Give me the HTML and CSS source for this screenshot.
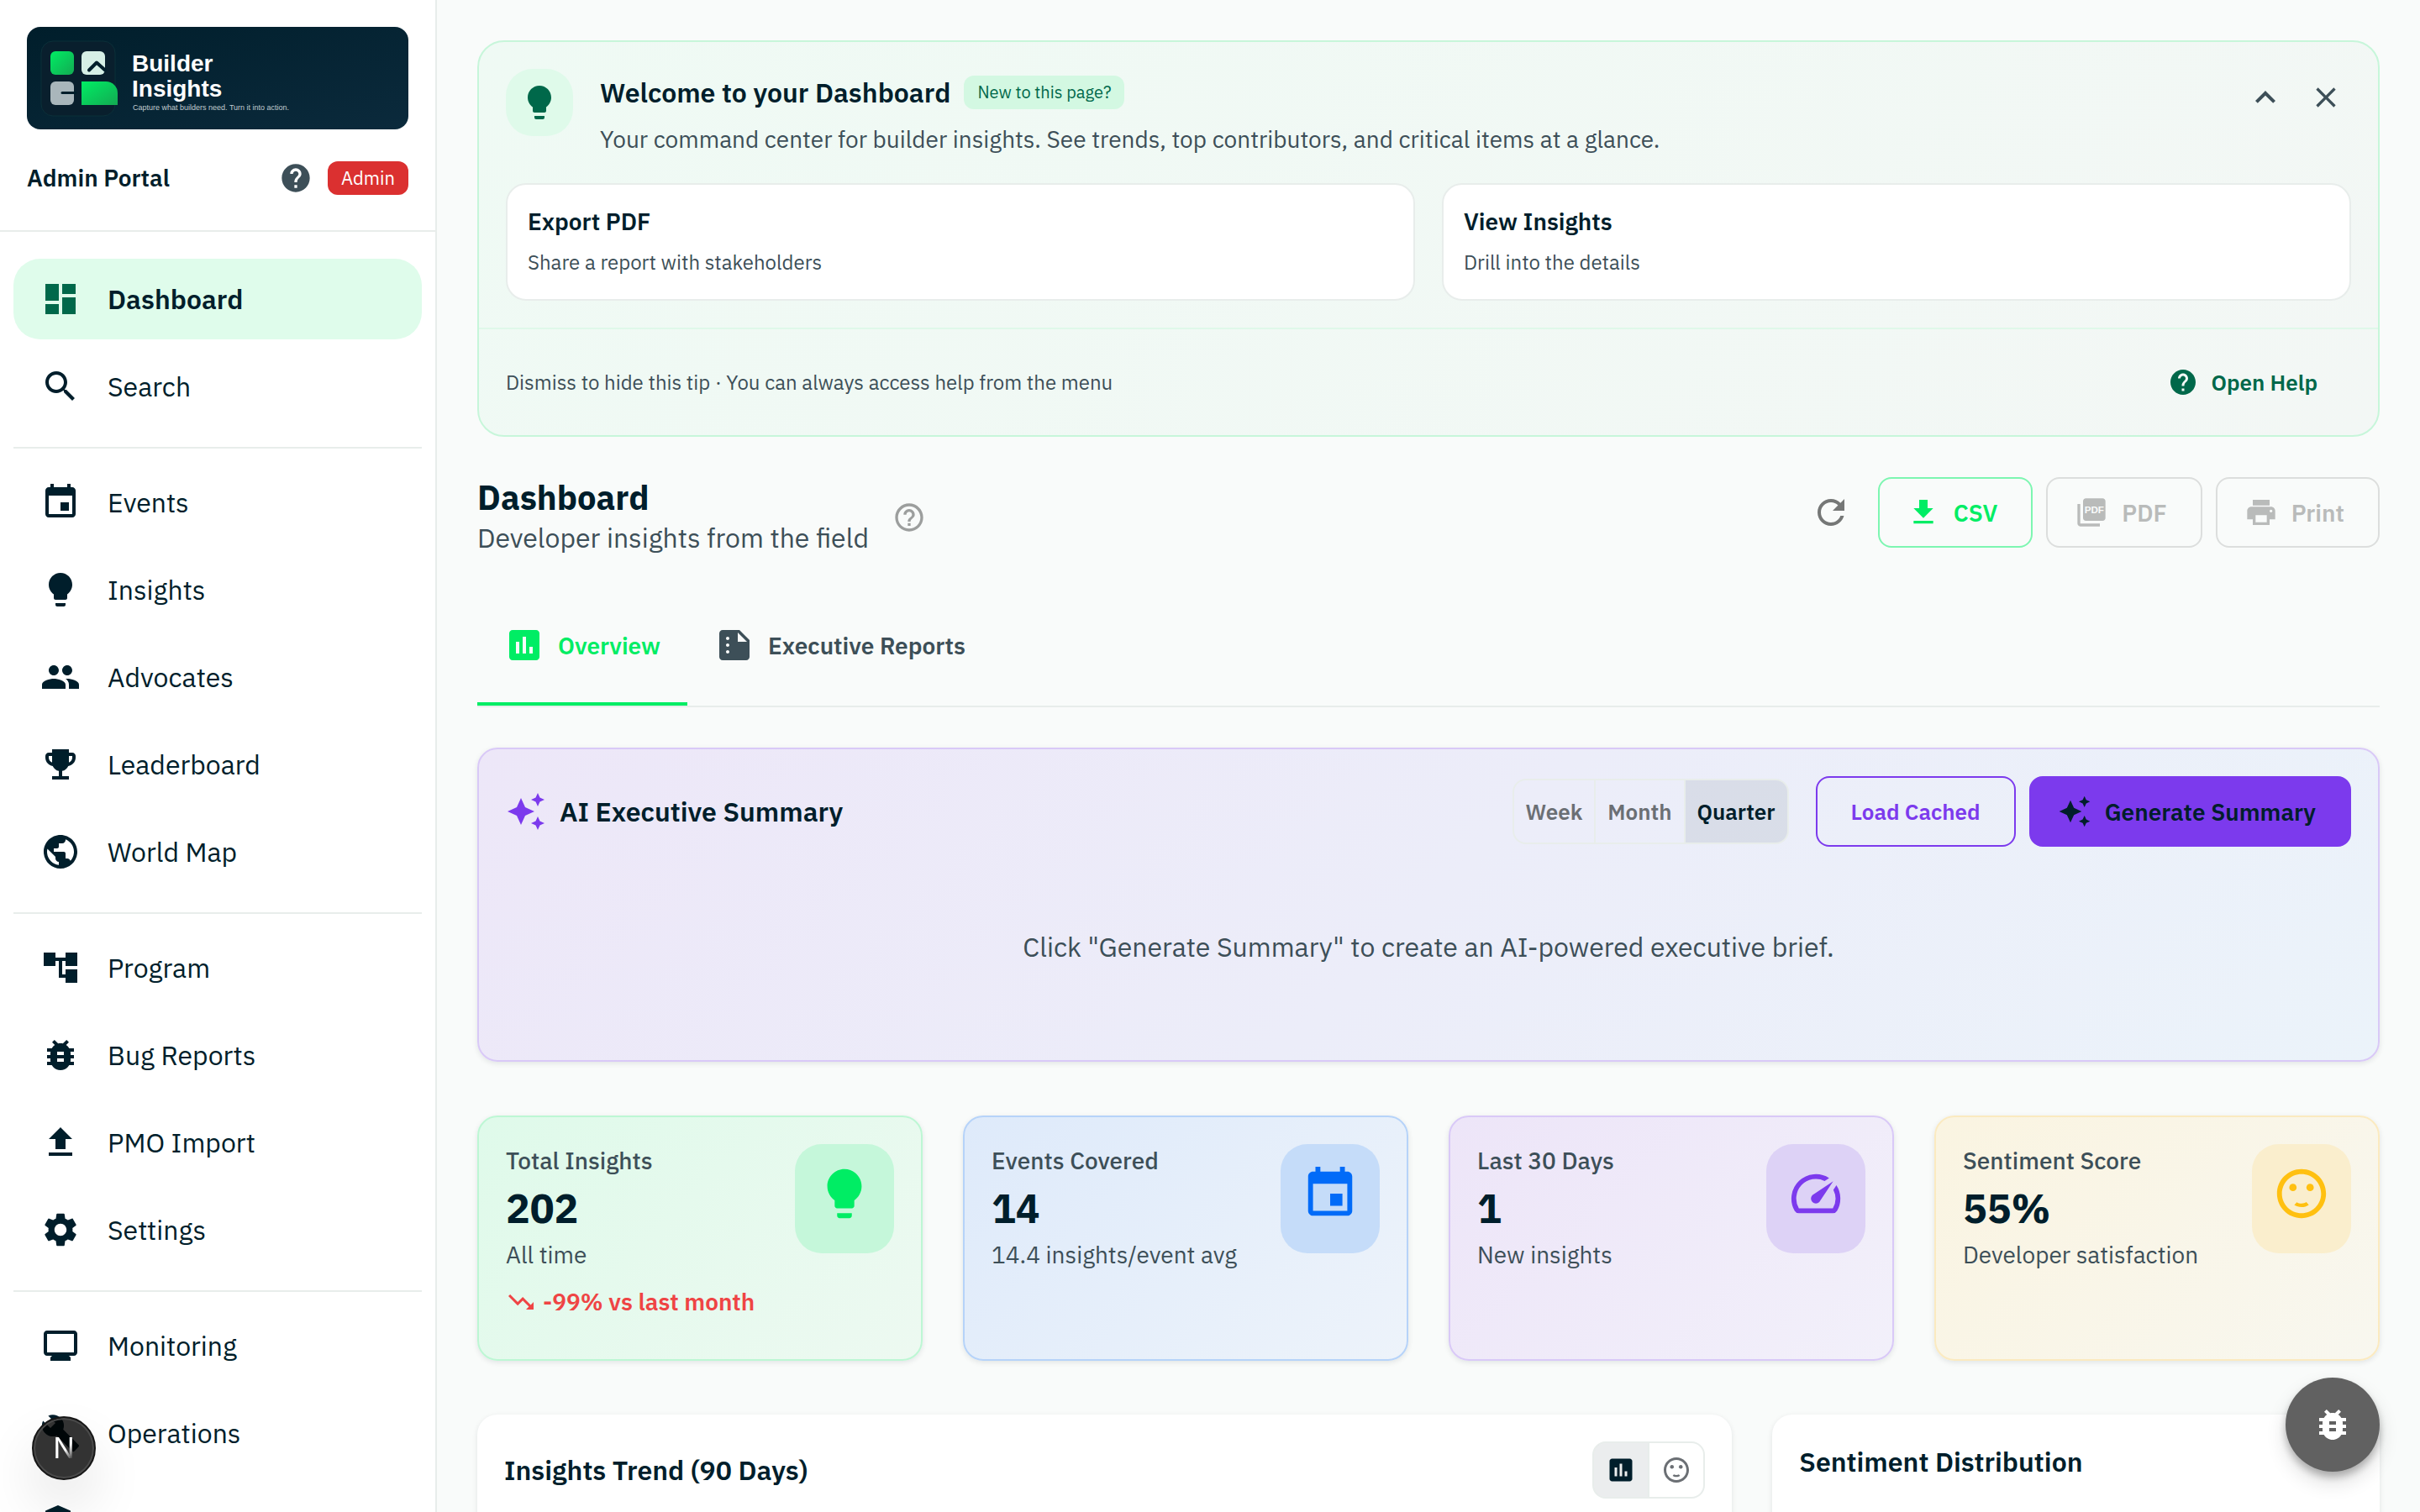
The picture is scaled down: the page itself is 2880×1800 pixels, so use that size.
FILE: index.html
```
<!DOCTYPE html>
<html lang="en">
<head>
    <meta charset="UTF-8">
    <meta name="viewport" content="width=device-width, initial-scale=1.0">
    <title>Builder Insights - Dashboard</title>
    <link rel="stylesheet" href="styles.css">
</head>
<body>
    <!-- Icon sprite -->
    <svg class="sprite" aria-hidden="true">
        <symbol id="i-dashboard" viewBox="0 0 24 24"><path d="M3 13h8V3H3v10zm0 8h8v-6H3v6zm10 0h8V11h-8v10zm0-18v6h8V3h-8z"/></symbol>
        <symbol id="i-search" viewBox="0 0 24 24"><path d="M15.5 14h-.79l-.28-.27C15.41 12.59 16 11.11 16 9.5 16 5.91 13.09 3 9.5 3S3 5.91 3 9.5 5.91 16 9.5 16c1.61 0 3.09-.59 4.23-1.57l.27.28v.79l5 4.99L20.49 19l-4.99-5zm-6 0C7.01 14 5 11.99 5 9.5S7.01 5 9.5 5 14 7.01 14 9.5 11.99 14 9.5 14z"/></symbol>
        <symbol id="i-event" viewBox="0 0 24 24"><path d="M17 12h-5v5h5v-5zM16 1v2H8V1H6v2H5c-1.11 0-1.99.9-1.99 2L3 19c0 1.1.89 2 2 2h14c1.1 0 2-.9 2-2V5c0-1.1-.9-2-2-2h-1V1h-2zm3 18H5V8h14v11z"/></symbol>
        <symbol id="i-bulb" viewBox="0 0 24 24"><path d="M9 21c0 .55.45 1 1 1h4c.55 0 1-.45 1-1v-1H9v1zm3-19C8.14 2 5 5.14 5 9c0 2.38 1.19 4.47 3 5.74V17c0 .55.45 1 1 1h6c.55 0 1-.45 1-1v-2.26c1.81-1.27 3-3.36 3-5.74 0-3.86-3.14-7-7-7z"/></symbol>
        <symbol id="i-people" viewBox="0 0 24 24"><path d="M16 11c1.66 0 2.99-1.34 2.99-3S17.66 5 16 5c-1.66 0-3 1.34-3 3s1.34 3 3 3zm-8 0c1.66 0 2.99-1.34 2.99-3S9.66 5 8 5C6.34 5 5 6.34 5 8s1.34 3 3 3zm0 2c-2.33 0-7 1.17-7 3.5V19h14v-2.5c0-2.33-4.67-3.5-7-3.5zm8 0c-.29 0-.62.02-.97.05 1.16.84 1.97 1.97 1.97 3.45V19h6v-2.5c0-2.33-4.67-3.5-7-3.5z"/></symbol>
        <symbol id="i-trophy" viewBox="0 0 24 24"><path d="M19 5h-2V3H7v2H5c-1.1 0-2 .9-2 2v1c0 2.55 1.92 4.63 4.39 4.94.63 1.5 1.98 2.63 3.61 2.96V19H7v2h10v-2h-4v-3.1c1.63-.33 2.98-1.46 3.61-2.96C19.08 12.63 21 10.55 21 8V7c0-1.1-.9-2-2-2zM5 8V7h2v3.82C5.84 10.4 5 9.3 5 8zm14 0c0 1.3-.84 2.4-2 2.82V7h2v1z"/></symbol>
        <symbol id="i-globe" viewBox="0 0 24 24"><path d="M12 2C6.48 2 2 6.48 2 12s4.48 10 10 10 10-4.48 10-10S17.52 2 12 2zm-1 17.93c-3.95-.49-7-3.85-7-7.93 0-.62.08-1.21.21-1.79L9 15v1c0 1.1.9 2 2 2v1.93zm6.9-2.54c-.26-.81-1-1.39-1.9-1.39h-1v-3c0-.55-.45-1-1-1H8v-2h2c.55 0 1-.45 1-1V7h2c1.1 0 2-.9 2-2v-.41c2.93 1.19 5 4.06 5 7.41 0 2.08-.8 3.97-2.1 5.39z"/></symbol>
        <symbol id="i-tree" viewBox="0 0 24 24"><path d="M22 11V3h-7v3H9V3H2v8h7V8h2v10h4v3h7v-8h-7v3h-2V8h2v3z"/></symbol>
        <symbol id="i-bug" viewBox="0 0 24 24"><path d="M20 8h-2.81c-.45-.78-1.07-1.45-1.82-1.96L17 4.41 15.59 3l-2.17 2.17C12.96 5.06 12.49 5 12 5c-.49 0-.96.06-1.41.17L8.41 3 7 4.41l1.62 1.63C7.88 6.55 7.26 7.22 6.81 8H4v2h2.09c-.05.33-.09.66-.09 1v1H4v2h2v1c0 .34.04.67.09 1H4v2h2.81c1.04 1.79 2.97 3 5.19 3s4.15-1.21 5.19-3H20v-2h-2.09c.05-.33.09-.66.09-1v-1h2v-2h-2v-1c0-.34-.04-.67-.09-1H20V8zm-6 8h-4v-2h4v2zm0-4h-4v-2h4v2z"/></symbol>
        <symbol id="i-upload" viewBox="0 0 24 24"><path d="M9 16h6v-6h4l-7-7-7 7h4v6zm-4 2h14v2H5v-2z"/></symbol>
        <symbol id="i-settings" viewBox="0 0 24 24"><path d="M19.14 12.94c.04-.3.06-.61.06-.94 0-.32-.02-.64-.07-.94l2.03-1.58c.18-.14.23-.41.12-.61l-1.92-3.32c-.12-.22-.37-.29-.59-.22l-2.39.96c-.5-.38-1.03-.7-1.62-.94l-.36-2.54c-.04-.24-.24-.41-.48-.41h-3.84c-.24 0-.43.17-.47.41l-.36 2.54c-.59.24-1.13.57-1.62.94l-2.39-.96c-.22-.08-.47 0-.59.22L2.74 8.87c-.12.21-.08.47.12.61l2.03 1.58c-.05.3-.09.63-.09.94s.02.64.07.94l-2.03 1.58c-.18.14-.23.41-.12.61l1.92 3.32c.12.22.37.29.59.22l2.39-.96c.5.38 1.03.7 1.62.94l.36 2.54c.05.24.24.41.48.41h3.84c.24 0 .44-.17.47-.41l.36-2.54c.59-.24 1.13-.56 1.62-.94l2.39.96c.22.08.47 0 .59-.22l1.92-3.32c.12-.22.07-.47-.12-.61l-2.01-1.58zM12 15.6c-1.98 0-3.6-1.62-3.6-3.6s1.62-3.6 3.6-3.6 3.6 1.62 3.6 3.6-1.62 3.6-3.6 3.6z"/></symbol>
        <symbol id="i-monitor" viewBox="0 0 24 24"><path d="M20 3H4c-1.1 0-2 .9-2 2v11c0 1.1.9 2 2 2h3l-1 1v2h12v-2l-1-1h3c1.1 0 2-.9 2-2V5c0-1.1-.9-2-2-2zm0 13H4V5h16v11z"/></symbol>
        <symbol id="i-build" viewBox="0 0 24 24"><path d="m22.7 19-9.1-9.1c.9-2.3.4-5-1.5-6.9-2-2-5-2.4-7.4-1.3L9 6 6 9 1.6 4.7C.4 7.1.9 10.1 2.9 12.1c1.9 1.9 4.6 2.4 6.9 1.5l9.1 9.1c.4.4 1 .4 1.4 0l2.3-2.3c.5-.4.5-1.1.1-1.4z"/></symbol>
        <symbol id="i-admin" viewBox="0 0 24 24"><path d="M17 11c.34 0 .67.04 1 .09V6.27L10.5 3 3 6.27v4.91c0 4.54 3.2 8.79 7.5 9.82.55-.13 1.08-.32 1.6-.55-.69-.98-1.1-2.17-1.1-3.45 0-3.31 2.69-6 6-6z"/><path d="M17 13c-2.21 0-4 1.79-4 4s1.79 4 4 4 4-1.79 4-4-1.79-4-4-4z"/></symbol>
        <symbol id="i-help" viewBox="0 0 24 24"><path d="M12 2C6.48 2 2 6.48 2 12s4.48 10 10 10 10-4.48 10-10S17.52 2 12 2zm1 17h-2v-2h2v2zm2.07-7.75-.9.92C13.45 12.9 13 13.5 13 15h-2v-.5c0-1.1.45-2.1 1.17-2.83l1.24-1.26c.37-.36.59-.86.59-1.41 0-1.1-.9-2-2-2s-2 .9-2 2H8c0-2.21 1.79-4 4-4s4 1.79 4 4c0 .88-.36 1.68-.93 2.25z"/></symbol>
        <symbol id="i-help-outline" viewBox="0 0 24 24"><path d="M11 18h2v-2h-2v2zm1-16C6.48 2 2 6.48 2 12s4.48 10 10 10 10-4.48 10-10S17.52 2 12 2zm0 18c-4.41 0-8-3.59-8-8s3.59-8 8-8 8 3.59 8 8-3.59 8-8 8zm0-14c-2.21 0-4 1.79-4 4h2c0-1.1.9-2 2-2s2 .9 2 2c0 2-3 1.75-3 5h2c0-2.25 3-2.5 3-5 0-2.21-1.79-4-4-4z"/></symbol>
        <symbol id="i-chevron-up" viewBox="0 0 24 24"><path d="m12 8-6 6 1.41 1.41L12 10.83l4.59 4.58L18 14z"/></symbol>
        <symbol id="i-close" viewBox="0 0 24 24"><path d="M19 6.41 17.59 5 12 10.59 6.41 5 5 6.41 10.59 12 5 17.59 6.41 19 12 13.41 17.59 19 19 17.59 13.41 12z"/></symbol>
        <symbol id="i-refresh" viewBox="0 0 24 24"><path d="M17.65 6.35C16.2 4.9 14.21 4 12 4c-4.42 0-7.99 3.58-7.99 8s3.57 8 7.99 8c3.73 0 6.84-2.55 7.73-6h-2.08c-.82 2.33-3.04 4-5.65 4-3.31 0-6-2.69-6-6s2.69-6 6-6c1.66 0 3.14.69 4.22 1.78L13 11h7V4l-2.35 2.35z"/></symbol>
        <symbol id="i-download" viewBox="0 0 24 24"><path d="M19 9h-4V3H9v6H5l7 7 7-7zM5 18v2h14v-2H5z"/></symbol>
        <symbol id="i-pdf" viewBox="0 0 24 24"><path d="M20 2H8c-1.1 0-2 .9-2 2v12c0 1.1.9 2 2 2h12c1.1 0 2-.9 2-2V4c0-1.1-.9-2-2-2zM4 6H2v14c0 1.1.9 2 2 2h14v-2H4V6z"/><text class="pdf-tag" x="14" y="12.7" text-anchor="middle">PDF</text></symbol>
        <symbol id="i-print" viewBox="0 0 24 24"><path d="M19 8H5c-1.66 0-3 1.34-3 3v6h4v4h12v-4h4v-6c0-1.66-1.34-3-3-3zm-3 11H8v-5h8v5zm3-7c-.55 0-1-.45-1-1s.45-1 1-1 1 .45 1 1-.45 1-1 1zm-1-9H6v4h12V3z"/></symbol>
        <symbol id="i-chart" viewBox="0 0 24 24"><path d="M19 3H5c-1.1 0-2 .9-2 2v14c0 1.1.9 2 2 2h14c1.1 0 2-.9 2-2V5c0-1.1-.9-2-2-2zM9 17H7v-7h2v7zm4 0h-2V7h2v10zm4 0h-2v-4h2v4z"/></symbol>
        <symbol id="i-report" viewBox="0 0 24 24"><path d="M15 3H5c-1.1 0-1.99.9-1.99 2L3 19c0 1.1.89 2 1.99 2H19c1.1 0 2-.9 2-2V9l-6-6zM8 17c-.55 0-1-.45-1-1s.45-1 1-1 1 .45 1 1-.45 1-1 1zm0-4c-.55 0-1-.45-1-1s.45-1 1-1 1 .45 1 1-.45 1-1 1zm0-4c-.55 0-1-.45-1-1s.45-1 1-1 1 .45 1 1-.45 1-1 1zm6 1V4.5l5.5 5.5H14z"/></symbol>
        <symbol id="i-sparkle" viewBox="0 0 24 24"><path d="m19 9 1.25-2.75L23 5l-2.75-1.25L19 1l-1.25 2.75L15 5l2.75 1.25L19 9zm-7.5.5L9 4 6.5 9.5 1 12l5.5 2.5L9 20l2.5-5.5L17 12l-5.5-2.5zM19 15l-1.25 2.75L15 19l2.75 1.25L19 23l1.25-2.75L23 19l-2.75-1.25L19 15z"/></symbol>
        <symbol id="i-speed" viewBox="0 0 24 24"><path d="m20.38 8.57-1.23 1.85a8 8 0 0 1-.22 7.58H5.07A8 8 0 0 1 15.58 6.85l1.85-1.23A10 10 0 0 0 3.35 19a2 2 0 0 0 1.72 1h13.85a2 2 0 0 0 1.74-1 10 10 0 0 0-.27-10.44zm-9.79 6.84a2 2 0 0 0 2.83 0l5.66-8.49-8.49 5.66a2 2 0 0 0 0 2.83z"/></symbol>
        <symbol id="i-smile" viewBox="0 0 24 24"><path d="M11.99 2C6.47 2 2 6.48 2 12s4.47 10 9.99 10C17.52 22 22 17.52 22 12S17.52 2 11.99 2zM12 20c-4.42 0-8-3.58-8-8s3.58-8 8-8 8 3.58 8 8-3.58 8-8 8z"/><circle cx="8.5" cy="9.5" r="1.5"/><circle cx="15.5" cy="9.5" r="1.5"/><path d="M12 16c-.73 0-1.38-.18-1.96-.52-.12.14-.86.98-1.01 1.15.86.55 1.87.87 2.97.87 1.11 0 2.12-.33 2.98-.88l-1.01-1.15c-.59.35-1.24.53-1.97.53z"/></symbol>
        <symbol id="i-trend-down" viewBox="0 0 24 24"><path d="m16 18 2.29-2.29-4.88-4.88-4 4L2 7.41 3.41 6l6 6 4-4 6.3 6.29L22 12v6z"/></symbol>
    </svg>

    <aside class="sidebar">
        <div class="sidebar-header">
            <svg class="logo" viewBox="0 0 454 122" role="img" aria-label="Builder Insights">
                <defs>
                    <linearGradient id="logoBg" x1="0" y1="0" x2="1" y2="1">
                        <stop offset="0" stop-color="#001e2b"/>
                        <stop offset="1" stop-color="#0b2a3c"/>
                    </linearGradient>
                    <linearGradient id="logoGreen" x1="0" y1="0" x2="1" y2="1">
                        <stop offset="0" stop-color="#00ed64"/>
                        <stop offset="1" stop-color="#13aa52"/>
                    </linearGradient>
                </defs>
                <rect width="454" height="122" rx="16" fill="url(#logoBg)"/>
                <rect x="17" y="17" width="88" height="89" rx="14" fill="#091f2d" stroke="#0b3039"/>
                <rect x="28" y="29" width="28" height="28" rx="6" fill="url(#logoGreen)"/>
                <rect x="65" y="29" width="28" height="28" rx="6" fill="#d6efe6"/>
                <path d="M74 51.5l9-9 10 9" fill="none" stroke="#001e2b" stroke-width="4" stroke-linecap="round" stroke-linejoin="round"/>
                <rect x="28" y="65" width="28" height="28" rx="6" fill="#a9b6bb"/>
                <path d="M42 78.5h16" fill="none" stroke="#001e2b" stroke-width="3" stroke-linecap="round"/>
                <path d="M65 65h29a14 14 0 0 1 14 14v14H65z" fill="url(#logoGreen)"/>
                <text class="logo-name" x="125" y="53">Builder</text>
                <text class="logo-name" x="125" y="83">Insights</text>
                <text class="logo-tagline" x="126" y="99">Capture what builders need. Turn it into action.</text>
            </svg>
            <div class="portal-row">
                <span class="portal-name">Admin Portal</span>
                <button class="plain-btn" aria-label="Help"><svg class="icon icon-md"><use href="#i-help"/></svg></button>
                <span class="role-chip">Admin</span>
            </div>
        </div>
        <nav class="nav">
            <a class="nav-item active" href="#"><svg class="icon"><use href="#i-dashboard"/></svg>Dashboard</a>
            <a class="nav-item" href="#"><svg class="icon"><use href="#i-search"/></svg>Search</a>
            <hr>
            <a class="nav-item" href="#"><svg class="icon"><use href="#i-event"/></svg>Events</a>
            <a class="nav-item" href="#"><svg class="icon"><use href="#i-bulb"/></svg>Insights</a>
            <a class="nav-item" href="#"><svg class="icon"><use href="#i-people"/></svg>Advocates</a>
            <a class="nav-item" href="#"><svg class="icon"><use href="#i-trophy"/></svg>Leaderboard</a>
            <a class="nav-item" href="#"><svg class="icon"><use href="#i-globe"/></svg>World Map</a>
            <hr>
            <a class="nav-item" href="#"><svg class="icon"><use href="#i-tree"/></svg>Program</a>
            <a class="nav-item" href="#"><svg class="icon"><use href="#i-bug"/></svg>Bug Reports</a>
            <a class="nav-item" href="#"><svg class="icon"><use href="#i-upload"/></svg>PMO Import</a>
            <a class="nav-item" href="#"><svg class="icon"><use href="#i-settings"/></svg>Settings</a>
            <hr>
            <a class="nav-item" href="#"><svg class="icon"><use href="#i-monitor"/></svg>Monitoring</a>
            <a class="nav-item" href="#"><svg class="icon"><use href="#i-build"/></svg>Operations</a>
            <a class="nav-item" href="#"><svg class="icon"><use href="#i-admin"/></svg>User Management</a>
        </nav>
    </aside>

    <main class="main">
        <section class="welcome">
            <div class="welcome-body">
                <div class="welcome-head">
                    <div class="welcome-icon"><svg class="icon"><use href="#i-bulb"/></svg></div>
                    <div class="welcome-text">
                        <div class="welcome-title">
                            <h2>Welcome to your Dashboard</h2>
                            <span class="new-chip">New to this page?</span>
                        </div>
                        <p>Your command center for builder insights. See trends, top contributors, and critical items at a glance.</p>
                    </div>
                    <div class="welcome-controls">
                        <button class="plain-btn" aria-label="Collapse"><svg class="icon"><use href="#i-chevron-up"/></svg></button>
                        <button class="plain-btn" aria-label="Dismiss"><svg class="icon icon-md"><use href="#i-close"/></svg></button>
                    </div>
                </div>
                <div class="tips">
                    <a class="tip" href="#">
                        <strong>Export PDF</strong>
                        <span>Share a report with stakeholders</span>
                    </a>
                    <a class="tip" href="#">
                        <strong>View Insights</strong>
                        <span>Drill into the details</span>
                    </a>
                </div>
            </div>
            <div class="welcome-footer">
                <span>Dismiss to hide this tip · You can always access help from the menu</span>
                <button class="help-btn"><svg class="icon icon-sm"><use href="#i-help"/></svg>Open Help</button>
            </div>
        </section>

        <header class="page-header">
            <div class="page-title">
                <h1>Dashboard</h1>
                <p>Developer insights from the field</p>
            </div>
            <button class="plain-btn muted" aria-label="About this page"><svg class="icon icon-md"><use href="#i-help-outline"/></svg></button>
            <div class="page-actions">
                <button class="plain-btn refresh" aria-label="Refresh"><svg class="icon"><use href="#i-refresh"/></svg></button>
                <button class="btn btn-green"><svg class="icon icon-md"><use href="#i-download"/></svg>CSV</button>
                <button class="btn" disabled><svg class="icon icon-md"><use href="#i-pdf"/></svg>PDF</button>
                <button class="btn" disabled><svg class="icon icon-md"><use href="#i-print"/></svg>Print</button>
            </div>
        </header>

        <div class="tabs" role="tablist">
            <button class="tab active" role="tab" aria-selected="true"><svg class="icon"><use href="#i-chart"/></svg>Overview</button>
            <button class="tab" role="tab" aria-selected="false"><svg class="icon"><use href="#i-report"/></svg>Executive Reports</button>
        </div>

        <section class="ai-card">
            <div class="ai-head">
                <svg class="icon ai-icon"><use href="#i-sparkle"/></svg>
                <h2>AI Executive Summary</h2>
                <div class="ai-actions">
                    <div class="toggle">
                        <button>Week</button>
                        <button>Month</button>
                        <button class="selected">Quarter</button>
                    </div>
                    <button class="btn btn-purple-outline">Load Cached</button>
                    <button class="btn btn-purple"><svg class="icon icon-md"><use href="#i-sparkle"/></svg>Generate Summary</button>
                </div>
            </div>
            <p class="ai-empty">Click "Generate Summary" to create an AI-powered executive brief.</p>
        </section>

        <section class="stats">
            <div class="stat stat-green">
                <div>
                    <div class="stat-label">Total Insights</div>
                    <div class="stat-value">202</div>
                    <div class="stat-note">All time</div>
                    <div class="stat-trend"><svg class="icon icon-sm"><use href="#i-trend-down"/></svg>-99% vs last month</div>
                </div>
                <div class="stat-icon"><svg class="icon icon-xl"><use href="#i-bulb"/></svg></div>
            </div>
            <div class="stat stat-blue">
                <div>
                    <div class="stat-label">Events Covered</div>
                    <div class="stat-value">14</div>
                    <div class="stat-note">14.4 insights/event avg</div>
                </div>
                <div class="stat-icon"><svg class="icon icon-xl"><use href="#i-event"/></svg></div>
            </div>
            <div class="stat stat-purple">
                <div>
                    <div class="stat-label">Last 30 Days</div>
                    <div class="stat-value">1</div>
                    <div class="stat-note">New insights</div>
                </div>
                <div class="stat-icon"><svg class="icon icon-xl"><use href="#i-speed"/></svg></div>
            </div>
            <div class="stat stat-yellow">
                <div>
                    <div class="stat-label">Sentiment Score</div>
                    <div class="stat-value">55%</div>
                    <div class="stat-note">Developer satisfaction</div>
                </div>
                <div class="stat-icon"><svg class="icon icon-xl"><use href="#i-smile"/></svg></div>
            </div>
        </section>

        <section class="panels">
            <div class="panel panel-wide">
                <h2>Insights Trend (90 Days)</h2>
                <div class="toggle toggle-icons">
                    <button class="selected" aria-label="Volume"><svg class="icon icon-sm"><use href="#i-chart"/></svg></button>
                    <button aria-label="Sentiment"><svg class="icon icon-sm"><use href="#i-smile"/></svg></button>
                </div>
            </div>
            <div class="panel panel-side">
                <h2>Sentiment Distribution</h2>
            </div>
        </section>
    </main>

    <button class="fab" aria-label="Report a bug"><svg class="icon"><use href="#i-bug"/></svg></button>
    <button class="dev-badge" aria-label="Dev tools"><span>N</span></button>
</body>
</html>
```

FILE: styles.css
```
* {
    box-sizing: border-box;
}
body {
    margin: 0;
    display: flex;
    height: 100vh;
    overflow: hidden;
    background-color: #f9fbfa;
    color: #001e2b;
    font-family: "IBM Plex Sans", Roboto, sans-serif;
    font-size: 32px;
    line-height: 48px;
}
h1, h2, p {
    margin: 0;
}
h2 {
    font-size: 32px;
    font-weight: 600;
}
a {
    color: inherit;
    text-decoration: none;
}
button {
    font-family: inherit;
    color: inherit;
    cursor: pointer;
}
button:disabled {
    cursor: default;
}

/* Icons */
.sprite {
    display: none;
}
.icon {
    display: block;
    flex: none;
    width: 48px;
    height: 48px;
    fill: currentColor;
}
.icon-sm {
    width: 36px;
    height: 36px;
}
.icon-md {
    width: 40px;
    height: 40px;
}
.icon-xl {
    width: 70px;
    height: 70px;
}
.pdf-tag {
    font: 700 7px "Liberation Sans", sans-serif;
    fill: #f9fbfa;
}

/* Sidebar */
.sidebar {
    flex: none;
    width: 520px;
    overflow-y: auto;
    scrollbar-width: none;
    background-color: #fff;
    border-right: 2px solid #e8edeb;
}
.sidebar-header {
    padding: 32px 32px 28px;
    border-bottom: 2px solid #e8edeb;
}
.logo {
    display: block;
    width: 100%;
}
.logo-name {
    font: 700 28px "Liberation Sans", sans-serif;
    fill: #fff;
}
.logo-tagline {
    font: 9px "Liberation Sans", sans-serif;
    fill: #c1ccd0;
}
.portal-row {
    display: flex;
    align-items: center;
    height: 68px;
    margin-top: 24px;
}
.portal-name {
    flex: 1;
    font-size: 28px;
    font-weight: 600;
}
.role-chip {
    padding: 0 16px;
    margin-left: 18px;
    border-radius: 12px;
    background-color: #db3030;
    color: #fff;
    font-size: 22px;
    line-height: 40px;
}
.nav {
    padding: 32px 16px;
}
.nav hr {
    margin: 24px 0 16px;
    border: none;
    border-top: 2px solid #e8edeb;
}
.nav-item {
    display: flex;
    align-items: center;
    gap: 32px;
    height: 96px;
    margin-bottom: 8px;
    padding: 0 32px;
    border-radius: 32px;
}
.nav-item.active {
    background-color: #dffceb;
    font-weight: 600;
}
.nav-item.active .icon {
    color: #00684a;
}

/* Buttons */
.plain-btn {
    display: flex;
    align-items: center;
    justify-content: center;
    padding: 0;
    border: none;
    background: none;
    color: #3d4f58;
}
.muted {
    color: #9c9e9d;
}
.btn {
    display: flex;
    align-items: center;
    gap: 16px;
    height: 84px;
    padding: 0 40px 0 32px;
    border: 2px solid #dcdedd;
    border-radius: 16px;
    background: none;
    font-size: 28px;
    font-weight: 600;
}
.btn:disabled {
    color: #b9bbba;
}
.btn-green {
    border-color: #7df6b1;
    color: #00ed64;
}
.btn-purple-outline {
    padding: 0 40px;
    border-color: #7c3aed;
    color: #7c3aed;
    font-size: 26px;
}
.btn-purple {
    border-color: #7c3aed;
    background-color: #7c3aed;
    color: #001e2b;
}
.toggle {
    display: flex;
    border: 2px solid #e8edeb;
    border-radius: 16px;
    overflow: hidden;
}
.toggle button {
    height: 74px;
    padding: 0 14px;
    border: none;
    background: none;
    color: #6b6f74;
    font-size: 26px;
    font-weight: 600;
}
.toggle button + button {
    border-left: 2px solid #e8edeb;
}
.toggle .selected {
    background-color: rgba(0, 30, 43, 0.08);
    color: #001e2b;
}
.toggle-icons button {
    height: 64px;
}

/* Main column */
.main {
    flex: 1;
    min-width: 0;
    padding: 48px;
    overflow-y: auto;
    scrollbar-width: none;
}

/* Welcome card */
.welcome {
    border: 2px solid #c7f6da;
    border-radius: 32px;
    background: linear-gradient(135deg, #effaf4, #f3f7f5);
}
.welcome-body {
    padding: 32px;
}
.welcome-head {
    display: flex;
    gap: 32px;
}
.welcome-icon {
    display: flex;
    align-items: center;
    justify-content: center;
    width: 80px;
    height: 80px;
    border-radius: 32px;
    background-color: #dffaea;
    color: #00684a;
}
.welcome-text {
    flex: 1;
    padding-top: 8px;
}
.welcome-title {
    display: flex;
    align-items: center;
    gap: 16px;
    margin-bottom: 16px;
}
.welcome-title h2 {
    line-height: 40px;
}
.new-chip {
    padding: 0 16px;
    border-radius: 12px;
    background-color: #d3f8e2;
    color: #00684a;
    font-size: 20px;
    line-height: 40px;
}
.welcome-text p {
    color: #3d4f58;
    font-size: 28px;
    line-height: 40px;
}
.welcome-controls {
    display: flex;
    gap: 12px;
}
.welcome-controls .plain-btn {
    width: 60px;
    height: 68px;
}
.tips {
    display: grid;
    grid-template-columns: 1fr 1fr;
    gap: 32px;
    margin-top: 32px;
}
.tip {
    display: flex;
    flex-direction: column;
    gap: 8px;
    padding: 24px;
    border: 2px solid #e8edeb;
    border-radius: 24px;
    background-color: #fff;
    line-height: 40px;
}
.tip strong {
    font-size: 28px;
    font-weight: 600;
}
.tip span {
    color: #3d4f58;
    font-size: 24px;
}
.welcome-footer {
    display: flex;
    align-items: center;
    justify-content: space-between;
    padding: 24px 32px;
    border-top: 2px solid #dff8e9;
    color: #3d4f58;
    font-size: 24px;
}
.help-btn {
    display: flex;
    align-items: center;
    gap: 16px;
    height: 78px;
    padding: 0 40px;
    border: none;
    background: none;
    color: #00684a;
    font-size: 26px;
    font-weight: 600;
}

/* Page header */
.page-header {
    display: flex;
    gap: 28px;
    margin: 48px 0 32px;
}
.page-title h1 {
    font-size: 40px;
    font-weight: 700;
}
.page-title p {
    color: #3d4f58;
}
.page-actions {
    display: flex;
    gap: 16px;
    height: 84px;
    margin-left: auto;
}
.refresh {
    width: 80px;
    color: #757776;
}

/* Tabs */
.tabs {
    display: flex;
    margin-bottom: 48px;
    border-bottom: 2px solid #e8edeb;
}
.tab {
    display: flex;
    align-items: center;
    gap: 16px;
    height: 144px;
    padding: 0 32px;
    border: none;
    background: none;
    color: #3d4f58;
    font-size: 28px;
    font-weight: 600;
}
.tab.active {
    color: #00ed64;
    box-shadow: inset 0 -4px #00ed64;
}

/* AI summary */
.ai-card {
    padding: 32px;
    border: 2px solid #d9c9f7;
    border-radius: 24px;
    background: linear-gradient(135deg, #ede7f8, #ebf3fa);
    box-shadow: 0 2px 6px rgba(0, 30, 43, 0.1);
}
.ai-head {
    display: flex;
    align-items: center;
    gap: 16px;
    margin-bottom: 16px;
}
.ai-icon {
    color: #7c3aed;
}
.ai-actions {
    display: flex;
    align-items: center;
    gap: 16px;
    margin-left: auto;
}
.ai-actions .toggle {
    margin-right: 16px;
}
.ai-empty {
    padding: 79px 0;
    color: #3d4f58;
    text-align: center;
}

/* Stat cards */
.stats {
    display: grid;
    grid-template-columns: repeat(4, 1fr);
    gap: 48px;
    margin-top: 64px;
}
.stat {
    display: flex;
    align-items: flex-start;
    justify-content: space-between;
    padding: 32px 32px 48px;
    border: 2px solid;
    border-radius: 24px;
    box-shadow: 0 2px 6px rgba(0, 30, 43, 0.1);
    font-size: 28px;
    line-height: 40px;
}
.stat-label {
    color: #3d4f58;
    font-weight: 500;
}
.stat-value {
    margin: 6px 0;
    color: #001e2b;
    font-size: 48px;
    font-weight: 700;
    line-height: 60px;
}
.stat-note {
    color: #3d4f58;
}
.stat-trend {
    display: flex;
    align-items: center;
    gap: 8px;
    margin-top: 16px;
    color: #ef4444;
    font-weight: 600;
}
.stat-icon {
    padding: 24px 24px 36px;
    border-radius: 32px;
}
.stat-green {
    border-color: #bdf7d4;
    background: linear-gradient(135deg, #dffaea, #edf9f1);
    color: #00ed64;
}
.stat-green .stat-icon {
    background-color: #c5f7da;
}
.stat-blue {
    border-color: #b6d3f9;
    background: linear-gradient(135deg, #deeafa, #edf3fa);
    color: #016bf8;
}
.stat-blue .stat-icon {
    background-color: #c5dcf9;
}
.stat-purple {
    border-color: #d9c9f7;
    background: linear-gradient(135deg, #ede5f8, #f2f0fa);
    color: #7c3aed;
}
.stat-purple .stat-icon {
    background-color: #ddd2f6;
}
.stat-yellow {
    border-color: #fbeac0;
    background: linear-gradient(135deg, #faf4e1, #f8f7ef);
    color: #ffc010;
}
.stat-yellow .stat-icon {
    background-color: #faeecd;
}

/* Chart panels */
.panels {
    display: grid;
    grid-template-columns: repeat(12, 1fr);
    gap: 48px;
    margin-top: 64px;
}
.panel {
    display: flex;
    align-items: flex-start;
    justify-content: space-between;
    min-height: 720px;
    padding: 32px;
    border-radius: 24px;
    background-color: #fff;
    box-shadow: 0 2px 6px rgba(0, 30, 43, 0.1);
}
.panel-wide {
    grid-column: span 8;
}
.panel-wide h2 {
    line-height: 68px;
}
.panel-side {
    grid-column: span 4;
}

/* Floating buttons */
.fab, .dev-badge {
    position: fixed;
    display: flex;
    align-items: center;
    justify-content: center;
    padding: 0;
    border: none;
    border-radius: 50%;
    color: #fff;
}
.fab {
    right: 48px;
    bottom: 48px;
    width: 112px;
    height: 112px;
    background-color: #616161;
    box-shadow: 0 6px 10px rgba(0, 0, 0, 0.25), 0 12px 24px rgba(0, 0, 0, 0.14);
}
.dev-badge {
    left: 38px;
    bottom: 38px;
    width: 76px;
    height: 76px;
    border: 2px solid #171717;
    background-color: rgba(0, 0, 0, 0.8);
    box-shadow: inset 0 0 0 2px #4a4a4a, 0 32px 64px rgba(0, 0, 0, 0.1);
}
.dev-badge span {
    background: linear-gradient(135deg, #fff 55%, #444 85%);
    background-clip: text;
    color: transparent;
    font-family: Inter, sans-serif;
    font-size: 34px;
    font-weight: 400;
    line-height: 36px;
}
```
